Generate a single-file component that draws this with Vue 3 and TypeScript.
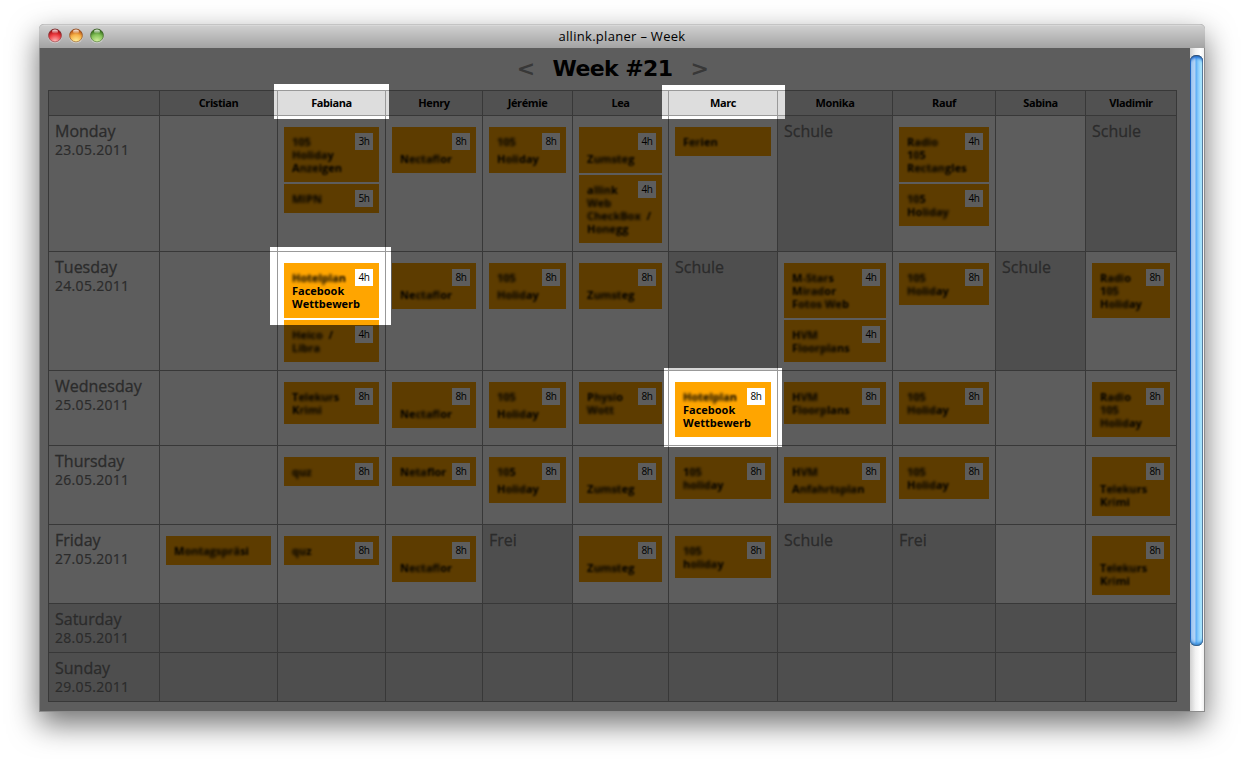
<script setup lang="ts">
interface Task {
  lines: string[]
  hours?: string
  drop?: boolean
}
interface Cell {
  note?: string
  tasks?: Task[]
}
interface Day {
  name: string
  date: string
  weekend?: boolean
  cells: Cell[]
}
interface Segment {
  text: string
  style: '' | 'soft' | 'blurred'
}

const people = ['Cristian', 'Fabiana', 'Henry', 'Jérémie', 'Lea', 'Marc', 'Monika', 'Rauf', 'Sabina', 'Vladimir']

// Square brackets mark the part of a title that is made unreadable.
const t = (hours: string, ...lines: string[]): Task => ({ lines, hours })
// The title continues below the hours badge instead of beside it.
const d = (hours: string, ...lines: string[]): Task => ({ lines, hours, drop: true })
const c = (...tasks: Task[]): Cell => ({ tasks })
const off = (note: string): Cell => ({ note })

const days: Day[] = [
  {
    name: 'Monday',
    date: '23.05.2011',
    cells: [
      c(),
      c(t('3h', '[105]', '[Holida]y', 'A[nze]igen'), t('5h', '[MIPN]')),
      c(d('8h', '', 'N[ectafl]or')),
      c(d('8h', '[105]', 'H[oli]day')),
      c(d('4h', '', 'Z[umste]g'), t('4h', 'a[llin]k', '[Web]', '[CheckBox]  /', 'H[one]gg')),
      c(t('', 'F[er]ien')),
      off('Schule'),
      c(t('4h', 'R[adio]', '1[0]5', 'R[ectan]gles'), t('4h', '[10]5', 'Ho[liday]')),
      c(),
      off('Schule'),
    ],
  },
  {
    name: 'Tuesday',
    date: '24.05.2011',
    cells: [
      c(),
      c(t('4h', '[Hotelpla]n', 'Facebook', 'Wettbewerb'), t('4h', '[Heico]  /', '[Libra]')),
      c(d('8h', '', 'Ne[ctafl]or')),
      c(d('8h', '[105]', '[Holid]ay')),
      c(d('8h', '', 'Z[umst]eg')),
      off('Schule'),
      c(t('4h', 'M[-Star]s', 'M[irad]or', 'F[otos We]b'), t('4h', 'H[VM]', 'F[loorpla]ns')),
      c(t('8h', '[105]', '[Holid]ay')),
      off('Schule'),
      c(t('8h', 'R[adi]o', '1[05]', 'H[olid]ay')),
    ],
  },
  {
    name: 'Wednesday',
    date: '25.05.2011',
    cells: [
      c(),
      c(t('8h', 'T[elekur]s', 'K[rimi]')),
      c(d('8h', '', 'Ne[ctafl]or')),
      c(d('8h', '[105]', 'H[olid]ay')),
      c(t('8h', 'P[hysi]o', '[Wott]')),
      c(t('8h', '[Hotelpla]n', 'Facebook', 'Wettbewerb')),
      c(t('8h', 'H[VM]', 'F[loorp]lans')),
      c(t('8h', '[105]', '[Holid]ay')),
      c(),
      c(t('8h', 'R[adi]o', '[105]', '[Holid]ay')),
    ],
  },
  {
    name: 'Thursday',
    date: '26.05.2011',
    cells: [
      c(),
      c(t('8h', '[quz]')),
      c(t('8h', 'N[eta]flor')),
      c(d('8h', '[10]5', 'H[olid]ay')),
      c(d('8h', '', 'Z[umst]eg')),
      c(t('8h', '1[05]', '[holid]ay')),
      c(d('8h', 'H[VM]', 'A[nfahrtspla]n')),
      c(t('8h', '[105]', 'H[olid]ay')),
      c(),
      c(d('8h', '', 'T[eleku]rs', 'K[ri]mi')),
    ],
  },
  {
    name: 'Friday',
    date: '27.05.2011',
    cells: [
      c(t('', 'M[ontagsprä]si')),
      c(t('8h', '[qu]z')),
      c(d('8h', '', 'N[ectafl]or')),
      off('Frei'),
      c(d('8h', '', 'Z[umst]eg')),
      c(t('8h', '[105]', 'h[olida]y')),
      off('Schule'),
      off('Frei'),
      c(),
      c(d('8h', '', 'T[eleku]rs', 'K[ri]mi')),
    ],
  },
  { name: 'Saturday', date: '28.05.2011', weekend: true, cells: people.map(() => ({})) },
  { name: 'Sunday', date: '29.05.2011', weekend: true, cells: people.map(() => ({})) },
]

function segments(line: string): Segment[] {
  const plain = line.includes('[') ? 'soft' : ''
  return line
    .split(/(\[[^\]]*\])/)
    .filter((s) => s.length > 0)
    .map((s) => (s.startsWith('[') ? { text: s.slice(1, -1), style: 'blurred' } : { text: s, style: plain }))
}
</script>

<template>
  <div class="desktop">
    <div class="window">
      <header class="titlebar">
        <div class="lights">
          <svg v-for="k in ['red', 'amber', 'green']" :key="k" width="15" height="16" viewBox="0 0 15 16">
            <defs>
              <linearGradient :id="'rim-' + k" x1="0" y1="0" x2="0" y2="1">
                <stop offset="0" :class="k + '-rim-top'" />
                <stop offset="1" :class="k + '-rim-bottom'" />
              </linearGradient>
              <radialGradient :id="'fill-' + k" cx=".5" cy=".95" r=".8">
                <stop offset="0" :class="k + '-glow'" />
                <stop offset=".65" :class="k + '-body'" />
                <stop offset="1" :class="k + '-dark'" />
              </radialGradient>
              <linearGradient :id="'shine-' + k" x1="0" y1="0" x2="0" y2="1">
                <stop offset="0" stop-color="#fff" stop-opacity=".9" />
                <stop offset="1" stop-color="#fff" stop-opacity=".05" />
              </linearGradient>
            </defs>
            <circle cx="7" cy="8.4" r="6.9" fill="#fff" fill-opacity=".4" />
            <circle cx="7" cy="7.5" r="6.4" :fill="`url(#fill-${k})`" :stroke="`url(#rim-${k})`" stroke-width="1" />
            <ellipse cx="7" cy="3.6" rx="3" ry="2" :fill="`url(#shine-${k})`" />
          </svg>
        </div>
        <span class="title">allink.planer – Week</span>
      </header>

      <div class="body">
        <main class="page">
          <h1 class="heading">
            <span class="arrow">&lt;</span>
            <span class="week">Week #21</span>
            <span class="arrow">&gt;</span>
          </h1>

          <div class="grid">
            <div class="head"></div>
            <div v-for="p in people" :key="p" class="head">{{ p }}</div>

            <template v-for="day in days" :key="day.name">
              <div class="day" :class="{ gray: day.weekend }">
                <span class="name">{{ day.name }}</span>
                <span class="date">{{ day.date }}</span>
              </div>
              <div
                v-for="(cell, i) in day.cells"
                :key="i"
                class="cell"
                :class="{ gray: day.weekend || cell.note, away: cell.note }"
              >
                <span v-if="cell.note" class="name">{{ cell.note }}</span>
                <div v-for="(task, j) in cell.tasks ?? []" :key="j" class="task" :class="{ drop: task.drop }">
                  <span v-for="(line, n) in task.lines" :key="n" class="line">
                    <span v-for="(s, m) in segments(line)" :key="m" :class="s.style">{{ s.text }}</span>
                  </span>
                  <span v-if="task.hours" class="hours">{{ task.hours }}</span>
                </div>
              </div>
            </template>
          </div>

          <svg class="dim" width="1150" height="663" viewBox="40 48 1150 663" shape-rendering="crispEdges">
            <path
              fill-rule="evenodd"
              d="M40 48H1190V711H40ZM274 84H389V119H274ZM662 85H785V119H662ZM270 247H391V325H270ZM664 368H782V447H664Z"
            />
          </svg>
        </main>
        <aside class="scrollbar"><div class="thumb"></div></aside>
      </div>
    </div>
  </div>
</template>

<style>
body {
  margin: 0;
  background: #fff;
}
</style>

<style scoped>
.desktop {
  box-sizing: border-box;
  width: 1244px;
  height: 759px;
  padding: 24px 39px 0;
  overflow: hidden;
  background: #fff;
  font-family: 'Open Sans', 'Noto Sans', sans-serif;
}
.window {
  box-sizing: border-box;
  width: 1166px;
  height: 688px;
  border-radius: 5px 5px 0 0;
  background: #8c8c8c;
  box-shadow: 0 12px 30px rgba(0, 0, 0, 0.56);
}
.titlebar {
  box-sizing: border-box;
  position: relative;
  display: flex;
  align-items: center;
  justify-content: center;
  height: 24px;
  border-top: 1px solid #c4c4c4;
  border-radius: 5px 5px 0 0;
  background: linear-gradient(#e2e2e2 0, #cfcfcf 1px, #a3a3a3 100%);
}
.lights {
  position: absolute;
  left: 9px;
  top: 3px;
  display: flex;
  gap: 6px;
}
.lights svg {
  display: block;
}
.red-rim-top { stop-color: #6e1a1c; }
.red-rim-bottom { stop-color: #b5696b; }
.red-glow { stop-color: #ffb9b9; }
.red-body { stop-color: #ee3d42; }
.red-dark { stop-color: #b01218; }
.amber-rim-top { stop-color: #8a3f12; }
.amber-rim-bottom { stop-color: #b08a58; }
.amber-glow { stop-color: #fff09a; }
.amber-body { stop-color: #f6b047; }
.amber-dark { stop-color: #c2601a; }
.green-rim-top { stop-color: #2c5417; }
.green-rim-bottom { stop-color: #7b9a60; }
.green-glow { stop-color: #d5f3a0; }
.green-body { stop-color: #84c158; }
.green-dark { stop-color: #3f7a22; }
.title {
  font-size: 13px;
  line-height: 23px;
  letter-spacing: 0.3px;
  color: #000;
}
.body {
  display: flex;
  height: 663px;
  padding: 0 1px;
}
.page {
  box-sizing: border-box;
  position: relative;
  width: 1150px;
  height: 663px;
  padding-left: 8px;
  background: #fff;
}
.heading {
  box-sizing: border-box;
  display: flex;
  justify-content: center;
  gap: 18px;
  width: 1129px;
  height: 42px;
  margin: 0;
  padding-top: 1px;
  font: bold 22px/40px 'DejaVu Sans', sans-serif;
  letter-spacing: -0.6px;
  color: #000;
}
.arrow {
  color: #999;
}
.grid {
  display: grid;
  grid-template-columns: 110px 117px 107px 96px 89px 95px 108px 114px 102px 89px 90px;
  grid-template-rows: 24px 135px 118px 74px 78px 78px 48px 48px;
  gap: 1px;
  width: 1127px;
  padding: 1px;
  background: #999;
}
.head {
  background: #ddd;
  font-size: 11px;
  font-weight: 700;
  line-height: 24px;
  letter-spacing: -0.4px;
  text-align: center;
}
.day,
.cell {
  box-sizing: border-box;
  padding: 6px;
  background: #fff;
  min-width: 0;
}
.day {
  display: flex;
  flex-direction: column;
}
.cell {
  padding-top: 11px;
}
.cell.away {
  padding-top: 6px;
}
.gray {
  background: #d6d6d6;
}
.name {
  display: block;
  font-size: 16px;
  line-height: 19px;
  color: #777;
  -webkit-text-stroke: 0.3px #777;
}
.date {
  margin-top: -1px;
  font-size: 14px;
  line-height: 19px;
  letter-spacing: 0.3px;
  color: #777;
  -webkit-text-stroke: 0.2px #777;
}
.task {
  position: relative;
  display: flex;
  flex-direction: column;
  padding: 8px;
  background: #ffa500;
}
.task + .task {
  margin-top: 2px;
}
.line {
  display: block;
  height: 13px;
  font-size: 11px;
  font-weight: 700;
  line-height: 13px;
  white-space: pre;
  color: #000;
}
.drop .line:first-child {
  margin-bottom: 4px;
}
.blurred {
  filter: blur(1.4px);
}
.soft {
  filter: blur(0.9px);
}
.hours {
  position: absolute;
  top: 6px;
  right: 6px;
  width: 18px;
  height: 17px;
  background: #fff;
  font-size: 10px;
  line-height: 17px;
  letter-spacing: -0.4px;
  text-align: center;
}
.dim {
  position: absolute;
  left: 0;
  top: 0;
  fill: rgba(0, 0, 0, 0.635);
}
.scrollbar {
  box-sizing: border-box;
  width: 14px;
  padding-top: 7px;
  background: linear-gradient(90deg, #d0d0d0, #f2f2f2 40%, #fff 75%, #f2f2f2);
}
.thumb {
  width: 13px;
  height: 591px;
  border-radius: 6px;
  background: linear-gradient(90deg, #1560cc 0 1px, #9cc4f0 1px, #b4d4f6 5px, #58acf4 6px, #86c8fb 8px, #b4f0ff 12px, #6f8590 12px);
  box-shadow: inset 0 1px 1px #3d4f66, inset 0 4px 3px -1px #1f6fd6, inset 0 -1px 1px #3d5f80, inset 0 -4px 3px -1px #3a8fe0;
}
</style>
